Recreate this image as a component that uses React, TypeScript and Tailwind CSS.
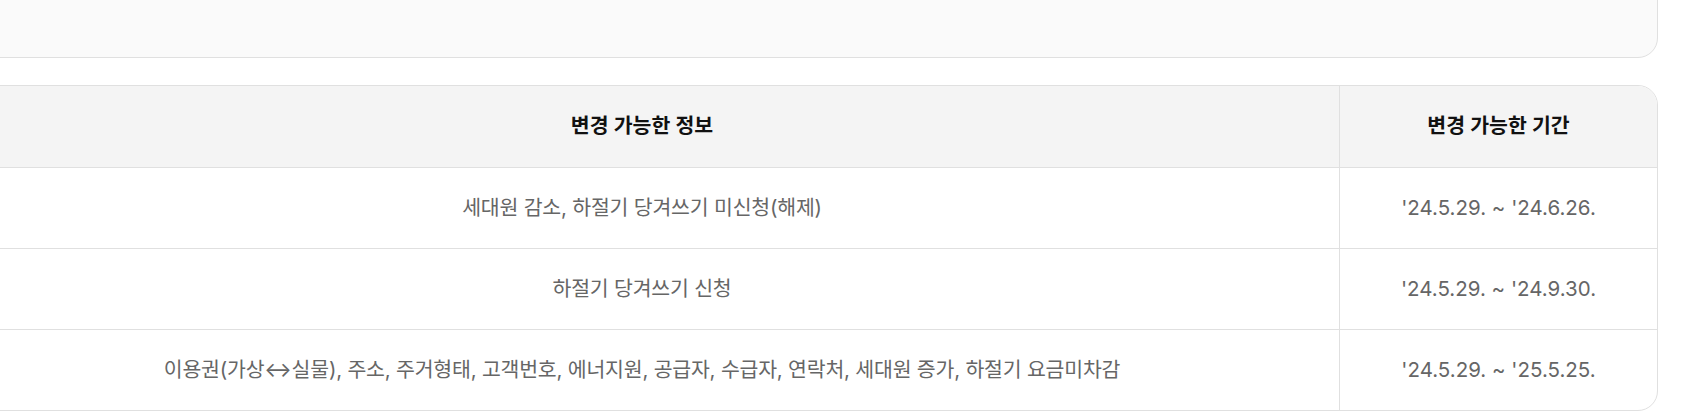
const rows = [
  { info: "세대원 감소, 하절기 당겨쓰기 미신청(해제)", period: "'24.5.29. ~ '24.6.26." },
  { info: "하절기 당겨쓰기 신청", period: "'24.5.29. ~ '24.9.30." },
  {
    info: "이용권(가상↔실물), 주소, 주거형태, 고객번호, 에너지원, 공급자, 수급자, 연락처, 세대원 증가, 하절기 요금미차감",
    period: "'24.5.29. ~ '25.5.25.",
  },
];

export default function App() {
  return (
    <div
      className="w-[1693px] h-[418px] overflow-hidden bg-white"
      style={{ fontFamily: '"Inter", "Noto Sans CJK KR", sans-serif' }}
    >
      <div className="ml-[-56px] mr-[35px]">
        {/* notice box above, mostly scrolled out of view */}
        <div className="mt-[-20px] h-[78px] rounded-[20px] border border-[#e0e0e0] bg-[#fafafa]" />

        <div className="mt-[27px] overflow-hidden rounded-[20px] border border-[#e0e0e0] text-[20.5px]">
          <div className="grid grid-cols-[1fr_318px] bg-[#f4f4f4] border-b border-[#e0e0e0] font-semibold text-[#111]">
            <div className="h-[81px] flex items-center justify-center">변경 가능한 정보</div>
            <div className="h-[81px] flex items-center justify-center border-l border-[#e0e0e0]">변경 가능한 기간</div>
          </div>
          {rows.map((row, i) => (
            <div
              key={i}
              className={
                i < rows.length - 1
                  ? "grid grid-cols-[1fr_318px] border-b border-[#e0e0e0] text-[#666]"
                  : "grid grid-cols-[1fr_318px] text-[#666]"
              }
            >
              <div className="h-[80px] flex items-center justify-center tracking-[-0.01em]">{row.info}</div>
              <div className="h-[80px] flex items-center justify-center border-l border-[#e0e0e0]">{row.period}</div>
            </div>
          ))}
        </div>
      </div>
    </div>
  );
}
